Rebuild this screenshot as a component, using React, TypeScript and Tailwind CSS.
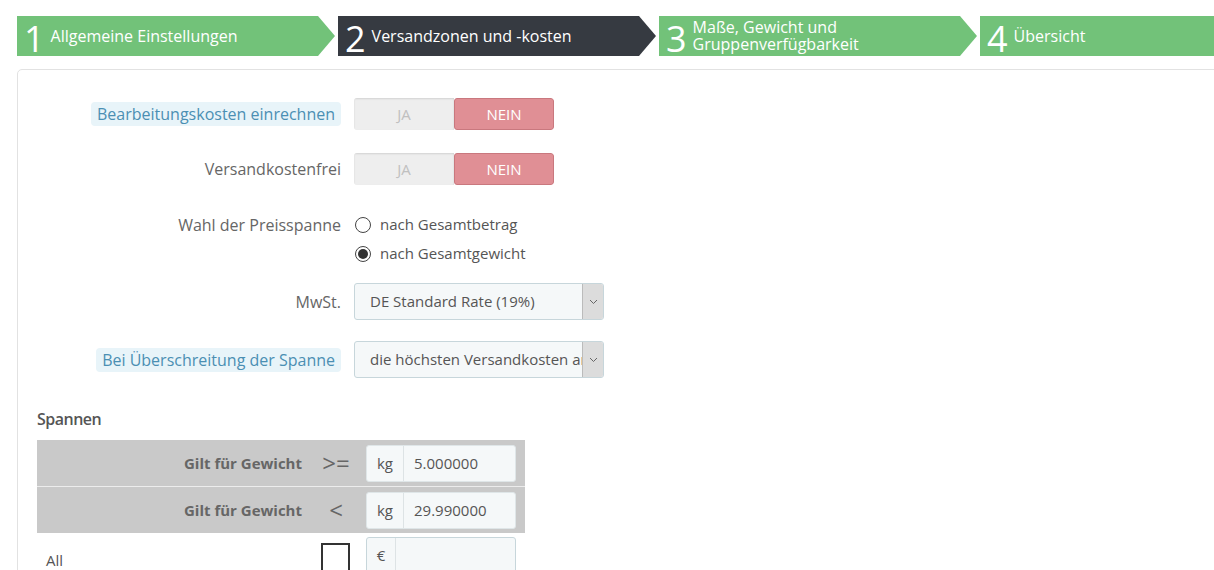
import { ReactNode } from 'react';

const font = { fontFamily: '"Open Sans", "Liberation Sans", sans-serif' };

const steps = [
  { n: '1', lines: ['Allgemeine Einstellungen'], active: false },
  { n: '2', lines: ['Versandzonen und -kosten'], active: true },
  { n: '3', lines: ['Maße, Gewicht und', 'Gruppenverfügbarkeit'], active: false },
  { n: '4', lines: ['Übersicht'], active: false },
];

const Steps = () => (
  <div className="flex gap-[3px] pl-[17px] pt-4 overflow-hidden">
    {steps.map((s) => (
      <div
        key={s.n}
        className={`shrink-0 w-[318px] h-10 flex items-center pl-[7px] text-white [clip-path:polygon(0_0,calc(100%-17px)_0,100%_50%,calc(100%-17px)_100%,0_100%)] ${
          s.active ? 'bg-[#363a41]' : 'bg-[#72c279]'
        }`}
      >
        <span className="text-[36px] leading-[36px] mr-[6px] mt-[5px]">{s.n}</span>
        <span className="text-[16px] leading-[17px]">
          {s.lines.map((l) => (
            <span key={l} className="block">
              {l}
            </span>
          ))}
        </span>
      </div>
    ))}
  </div>
);

const Label = ({ children, help = false }: { children: ReactNode; help?: boolean }) => (
  <div className="w-[323px] shrink-0 flex justify-end">
    {help ? (
      <span className="bg-[#e8f4f9] text-[#4b8fb3] text-[16px] leading-6 px-[6px] rounded-sm">{children}</span>
    ) : (
      <span className="text-[#666] text-[16px] leading-6">{children}</span>
    )}
  </div>
);

const Toggle = () => (
  <div className="flex w-[200px] h-8 rounded-[3px] overflow-hidden text-[15px]">
    <div className="w-1/2 flex items-center justify-center bg-[#eeeeee] text-[#c0c0c0] shadow-[inset_0_1px_2px_rgba(0,0,0,0.12)]">
      JA
    </div>
    <div className="w-1/2 flex items-center justify-center bg-[#e08f95] text-white border border-[#c9787e] rounded-[3px]">
      NEIN
    </div>
  </div>
);

const Chevron = () => (
  <svg width="9" height="6" viewBox="0 0 9 6" fill="none">
    <path d="M1 1l3.5 3.5L8 1" stroke="#666" strokeWidth="1" />
  </svg>
);

const Select = ({ value }: { value: string }) => (
  <div className="flex w-[250px] h-[37px] rounded-[3px] border border-[#c7d6db] bg-[#f5f8f9] overflow-hidden">
    <div className="flex-1 min-w-0 flex items-center pl-[15px] text-[15px] text-[#555] whitespace-nowrap overflow-hidden">
      {value}
    </div>
    <div className="w-[21px] shrink-0 flex items-center justify-center bg-[#dcdcdc] border-l border-[#bbb]">
      <Chevron />
    </div>
  </div>
);

const Radio = ({ checked, label }: { checked?: boolean; label: string }) => (
  <div className="flex items-center h-[29px]">
    <span className="w-4 h-4 rounded-full border border-[#444] flex items-center justify-center bg-white mr-[9px]">
      {checked && <span className="w-[10px] h-[10px] rounded-full bg-[#333]" />}
    </span>
    <span className="text-[15px] text-[#555]">{label}</span>
  </div>
);

const InputGroup = ({ addon, value }: { addon: string; value: string }) => (
  <div className="flex w-[150px] h-[37px] rounded-[3px] bg-[#f5f8f9] border border-[#dfe6e8] text-[15px] text-[#555]">
    <div className="w-[37px] shrink-0 flex items-center justify-center border-r border-[#dde3e5]">{addon}</div>
    <div className="flex-1 flex items-center pl-[10px]">{value}</div>
  </div>
);

const RangeRow = ({ op, value }: { op: string; value: string }) => (
  <div className="grid grid-cols-[273px_56px_159px] h-[46px] items-center bg-[#c9c9c9]">
    <div className="text-right pr-2 text-[15px] font-bold text-[#666]">Gilt für Gewicht</div>
    <div className="text-center text-[24px] text-[#666] leading-none -ml-[4px]">{op}</div>
    <div className="flex">
      <InputGroup addon="kg" value={value} />
    </div>
  </div>
);

export default function App() {
  return (
    <div className="w-[1214px] h-[570px] overflow-hidden bg-white" style={font}>
      <Steps />
      <div className="ml-[17px] mt-[13px] w-[1220px] h-[600px] border border-[#e2e2e2] rounded-[5px] pt-[28px]">
        <div className="flex items-center h-8">
          <Label help>Bearbeitungskosten einrechnen</Label>
          <div className="ml-[13px]">
            <Toggle />
          </div>
        </div>
        <div className="flex items-center h-8 mt-[23px]">
          <Label>Versandkostenfrei</Label>
          <div className="ml-[13px]">
            <Toggle />
          </div>
        </div>
        <div className="flex mt-[25px]">
          <div className="h-[29px] flex items-center">
            <Label>Wahl der Preisspanne</Label>
          </div>
          <div className="ml-[14px]">
            <Radio label="nach Gesamtbetrag" />
            <Radio checked label="nach Gesamtgewicht" />
          </div>
        </div>
        <div className="flex items-center mt-[15px]">
          <Label>MwSt.</Label>
          <div className="ml-[13px]">
            <Select value="DE Standard Rate (19%)" />
          </div>
        </div>
        <div className="flex items-center mt-[21px]">
          <Label help>Bei Überschreitung der Spanne</Label>
          <div className="ml-[13px]">
            <Select value="die höchsten Versandkosten anwenden" />
          </div>
        </div>

        <div className="pl-[19px] mt-[30px]">
          <div className="text-[16px] font-semibold text-[#555] leading-[22px] tracking-[-0.5px]">Spannen</div>
          <div className="mt-[10px] w-[488px]">
            <RangeRow op=">=" value="5.000000" />
            <div className="h-px bg-[#ececec]" />
            <RangeRow op="<" value="29.990000" />
            <div className="grid grid-cols-[273px_56px_159px] items-start pt-[4px]">
              <div className="pl-[9px] pt-[12px] text-[15px] text-[#555]">All</div>
              <div className="flex justify-center pt-[6px] -ml-[6px]">
                <span className="w-[29px] h-[29px] border-2 border-[#333] bg-white" />
              </div>
              <div className="flex">
                <div className="flex w-[150px] h-[37px] rounded-[3px] bg-[#f5f8f9] border border-[#c7d6db] text-[15px] text-[#555]">
                  <div className="w-[29px] shrink-0 flex items-center justify-center border-r border-[#dde3e5]">€</div>
                  <div className="flex-1" />
                </div>
              </div>
            </div>
          </div>
        </div>
      </div>
    </div>
  );
}
